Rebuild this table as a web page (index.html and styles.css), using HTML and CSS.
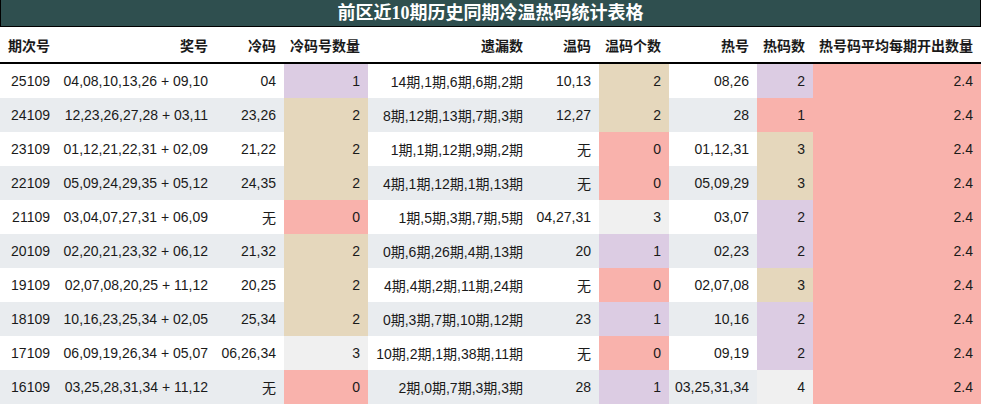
FILE: index.html
```html
<!DOCTYPE html>
<html lang="zh">
<head>
<meta charset="utf-8">
<title>前区近10期历史同期冷温热码统计表格</title>
<link rel="stylesheet" href="styles.css">
</head>
<body>
<div class="sheet">
  <div class="title">前区近10期历史同期冷温热码统计表格</div>
  <table class="stats">
    <colgroup>
      <col class="c1"><col class="c2"><col class="c3"><col class="c4"><col class="c5">
      <col class="c6"><col class="c7"><col class="c8"><col class="c9"><col class="c10">
    </colgroup>
    <thead>
      <tr>
        <th>期次号</th><th>奖号</th><th>冷码</th><th>冷码号数量</th><th>遗漏数</th>
        <th>温码</th><th>温码个数</th><th>热号</th><th>热码数</th><th>热号码平均每期开出数量</th>
      </tr>
    </thead>
    <tbody>
      <tr><td>25109</td><td>04,08,10,13,26 + 09,10</td><td>04</td><td class="pu">1</td><td>14期,1期,6期,6期,2期</td><td>10,13</td><td class="ta">2</td><td>08,26</td><td class="pu">2</td><td class="sa">2.4</td></tr>
      <tr><td>24109</td><td>12,23,26,27,28 + 03,11</td><td>23,26</td><td class="ta">2</td><td>8期,12期,13期,7期,3期</td><td>12,27</td><td class="ta">2</td><td>28</td><td class="sa">1</td><td class="sa">2.4</td></tr>
      <tr><td>23109</td><td>01,12,21,22,31 + 02,09</td><td>21,22</td><td class="ta">2</td><td>1期,1期,12期,9期,2期</td><td>无</td><td class="sa">0</td><td>01,12,31</td><td class="ta">3</td><td class="sa">2.4</td></tr>
      <tr><td>22109</td><td>05,09,24,29,35 + 05,12</td><td>24,35</td><td class="ta">2</td><td>4期,1期,12期,1期,13期</td><td>无</td><td class="sa">0</td><td>05,09,29</td><td class="ta">3</td><td class="sa">2.4</td></tr>
      <tr><td>21109</td><td>03,04,07,27,31 + 06,09</td><td>无</td><td class="sa">0</td><td>1期,5期,3期,7期,5期</td><td>04,27,31</td><td class="gr">3</td><td>03,07</td><td class="pu">2</td><td class="sa">2.4</td></tr>
      <tr><td>20109</td><td>02,20,21,23,32 + 06,12</td><td>21,32</td><td class="ta">2</td><td>0期,6期,26期,4期,13期</td><td>20</td><td class="pu">1</td><td>02,23</td><td class="pu">2</td><td class="sa">2.4</td></tr>
      <tr><td>19109</td><td>02,07,08,20,25 + 11,12</td><td>20,25</td><td class="ta">2</td><td>4期,4期,2期,11期,24期</td><td>无</td><td class="sa">0</td><td>02,07,08</td><td class="ta">3</td><td class="sa">2.4</td></tr>
      <tr><td>18109</td><td>10,16,23,25,34 + 02,05</td><td>25,34</td><td class="ta">2</td><td>0期,3期,7期,10期,12期</td><td>23</td><td class="pu">1</td><td>10,16</td><td class="pu">2</td><td class="sa">2.4</td></tr>
      <tr><td>17109</td><td>06,09,19,26,34 + 05,07</td><td>06,26,34</td><td class="gr">3</td><td>10期,2期,1期,38期,11期</td><td>无</td><td class="sa">0</td><td>09,19</td><td class="pu">2</td><td class="sa">2.4</td></tr>
      <tr><td>16109</td><td>03,25,28,31,34 + 11,12</td><td>无</td><td class="sa">0</td><td>2期,0期,7期,3期,3期</td><td>28</td><td class="pu">1</td><td>03,25,31,34</td><td class="gr">4</td><td class="sa">2.4</td></tr>
    </tbody>
  </table>
</div>
</body>
</html>
```

FILE: styles.css
```css
html, body {
  margin: 0;
  padding: 0;
  background: #ffffff;
}

.sheet {
  width: 981px;
  font-family: "Liberation Sans", "Noto Sans CJK SC", sans-serif;
  color: #1a1a1a;
}

.title {
  box-sizing: border-box;
  height: 27px;
  background: #2f4f4f;
  border-left: 1px solid #000;
  border-right: 1px solid #000;
  border-bottom: 1px solid #000;
  color: #ffffff;
  font-family: "Liberation Serif", "Noto Sans CJK SC", serif;
  font-weight: bold;
  font-size: 18px;
  line-height: 26px;
  text-align: center;
}

.stats {
  width: 981px;
  border-collapse: separate;
  border-spacing: 0;
  table-layout: fixed;
  font-size: 14px;
}

.c1 { width: 58px; }
.c2 { width: 158px; }
.c3 { width: 68px; }
.c4 { width: 84px; }
.c5 { width: 163px; }
.c6 { width: 68px; }
.c7 { width: 70px; }
.c8 { width: 88px; }
.c9 { width: 56px; }
.c10 { width: 168px; }

.stats thead tr {
  height: 37px;
}

.stats th {
  height: 37px;
  padding: 0 8px 0 0;
  text-align: right;
  font-weight: bold;
  font-family: "Noto Sans CJK SC", sans-serif;
  white-space: nowrap;
  border-bottom: 2px solid #000;
  box-sizing: border-box;
  vertical-align: middle;
}

.stats th:first-child {
  text-align: left;
  padding-left: 8px;
}

.stats tbody tr {
  height: 34px;
}

.stats td {
  height: 34px;
  padding: 0 8px 0 0;
  text-align: right;
  white-space: nowrap;
  box-sizing: border-box;
  vertical-align: middle;
}

.stats tbody tr:nth-child(even) td {
  background: #e9ecef;
}

.stats tbody tr td.pu { background: #dccce3; }
.stats tbody tr td.ta { background: #e5d7bc; }
.stats tbody tr td.sa { background: #f9b2ac; }
.stats tbody tr td.gr { background: #f0f0f0; }
```
